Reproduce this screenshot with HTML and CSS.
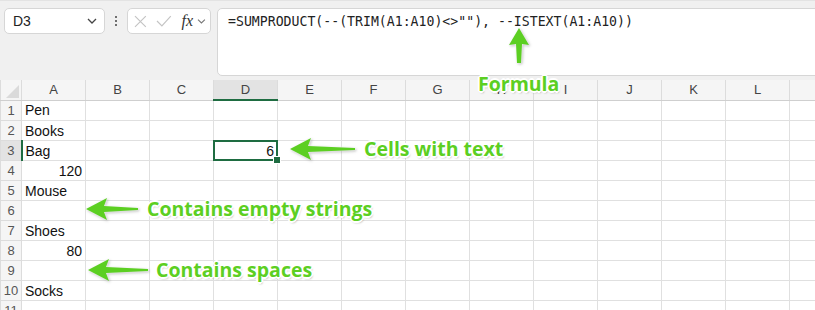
FILE: index.html
```html
<!DOCTYPE html>
<html lang="en">
<head>
    <meta charset="UTF-8">
    <title>Count cells with text</title>
    <link rel="stylesheet" href="styles.css">
</head>
<body>
<div class="app">
    <!-- Name box + formula bar -->
    <div class="toolbar">
        <div class="name-box">
            <span>D3</span>
            <svg width="10" height="6" viewBox="0 0 10 6"><path d="M1 1l4 4 4-4" fill="none" stroke="#444" stroke-width="1.3"/></svg>
        </div>
        <div class="kebab"><i></i><i></i><i></i></div>
        <div class="fx-group">
            <svg width="13" height="13" viewBox="0 0 13 13"><path d="M1 1l11 11M12 1L1 12" stroke="#c4c4c4" stroke-width="1.2"/></svg>
            <svg width="16" height="12" viewBox="0 0 16 12"><path d="M1 6l5 5L15 1" fill="none" stroke="#c4c4c4" stroke-width="1.2"/></svg>
            <span class="fx">fx</span>
            <svg width="9" height="5" viewBox="0 0 9 5"><path d="M1 .5l3.5 3.5L8 .5" fill="none" stroke="#777" stroke-width="1.1"/></svg>
        </div>
        <div class="formula">=SUMPRODUCT(--(TRIM(A1:A10)&lt;&gt;""), --ISTEXT(A1:A10))</div>
    </div>

    <!-- Worksheet -->
    <table class="sheet">
        <colgroup>
            <col class="c-head">
            <col><col><col><col><col><col><col><col><col><col><col><col><col>
        </colgroup>
        <tr class="col-heads">
            <th class="corner"><span></span></th>
            <th>A</th><th>B</th><th>C</th><th class="active">D</th><th>E</th><th>F</th><th>G</th><th>H</th><th>I</th><th>J</th><th>K</th><th>L</th><th></th>
        </tr>
        <tr><th>1</th><td>Pen</td><td></td><td></td><td></td><td></td><td></td><td></td><td></td><td></td><td></td><td></td><td></td><td></td></tr>
        <tr><th>2</th><td>Books</td><td></td><td></td><td></td><td></td><td></td><td></td><td></td><td></td><td></td><td></td><td></td><td></td></tr>
        <tr><th class="active">3</th><td>Bag</td><td></td><td></td><td class="num selected">6<span class="handle"></span></td><td></td><td></td><td></td><td></td><td></td><td></td><td></td><td></td><td></td></tr>
        <tr><th>4</th><td class="num">120</td><td></td><td></td><td></td><td></td><td></td><td></td><td></td><td></td><td></td><td></td><td></td><td></td></tr>
        <tr><th>5</th><td>Mouse</td><td></td><td></td><td></td><td></td><td></td><td></td><td></td><td></td><td></td><td></td><td></td><td></td></tr>
        <tr><th>6</th><td></td><td></td><td></td><td></td><td></td><td></td><td></td><td></td><td></td><td></td><td></td><td></td><td></td></tr>
        <tr><th>7</th><td>Shoes</td><td></td><td></td><td></td><td></td><td></td><td></td><td></td><td></td><td></td><td></td><td></td><td></td></tr>
        <tr><th>8</th><td class="num">80</td><td></td><td></td><td></td><td></td><td></td><td></td><td></td><td></td><td></td><td></td><td></td><td></td></tr>
        <tr><th>9</th><td></td><td></td><td></td><td></td><td></td><td></td><td></td><td></td><td></td><td></td><td></td><td></td><td></td></tr>
        <tr><th>10</th><td>Socks</td><td></td><td></td><td></td><td></td><td></td><td></td><td></td><td></td><td></td><td></td><td></td><td></td></tr>
        <tr><th>11</th><td></td><td></td><td></td><td></td><td></td><td></td><td></td><td></td><td></td><td></td><td></td><td></td><td></td></tr>
    </table>

    <!-- Callouts drawn over the sheet -->
    <svg class="arrows" width="815" height="310" viewBox="0 0 815 310">
        <polygon points="519,28 529,45 522,44 521,63 517,63 516,44 509,45"/>
        <polygon points="290,149 311,138 308,146 355,148 355,150 308,152 311,160"/>
        <polygon points="86,209 107,198 104,206 138,208 138,210 104,212 107,220"/>
        <polygon points="88,270 109,259 106,267 148,269 148,271 106,273 109,281"/>
    </svg>
    <div class="note note-formula">Formula</div>
    <div class="note note-text">Cells with text</div>
    <div class="note note-empty">Contains empty strings</div>
    <div class="note note-spaces">Contains spaces</div>
</div>
</body>
</html>
```

FILE: styles.css
```css
body {
    margin: 0;
    background: #ffffff;
    font-family: "Liberation Sans", Arial, sans-serif;
    overflow: hidden;
}
.app {
    position: relative;
    width: 815px;
    height: 310px;
    overflow: hidden;
}
.toolbar {
    display: flex;
    align-items: flex-start;
    height: 80px;
    box-sizing: border-box;
    padding: 7px 0 0 4px;
    background: #f0f0f0;
    border-top: 1px solid #e3e3e3;
}
.name-box {
    display: flex;
    align-items: center;
    justify-content: space-between;
    width: 101px;
    height: 26px;
    box-sizing: border-box;
    padding: 0 7px 0 8px;
    background: #ffffff;
    border: 1px solid #d6d6d6;
    border-radius: 5px;
    font-size: 14px;
    color: #222;
}
.kebab {
    width: 22px;
    height: 26px;
    display: flex;
    flex-direction: column;
    align-items: center;
    justify-content: center;
    gap: 2px;
}
.kebab i {
    width: 2px;
    height: 2px;
    background: #444;
    border-radius: 1px;
}
.fx-group {
    display: flex;
    align-items: center;
    gap: 9px;
    width: 84px;
    height: 26px;
    box-sizing: border-box;
    padding: 0 4px 0 6px;
    background: #ffffff;
    border: 1px solid #d6d6d6;
    border-radius: 5px;
}
.fx-group .fx {
    font-family: "Liberation Serif", "Times New Roman", serif;
    font-style: italic;
    font-size: 16px;
    color: #333;
    margin-left: 1px;
    margin-right: -5px;
}
.formula {
    flex: 1;
    height: 68px;
    margin-left: 6px;
    margin-right: -10px;
    box-sizing: border-box;
    padding: 5px 0 0 10px;
    background: #ffffff;
    border: 1px solid #d6d6d6;
    border-radius: 5px;
    font-family: "DejaVu Sans Mono", monospace;
    font-size: 13.2px;
    color: #222;
    white-space: nowrap;
}

/* worksheet grid */
.sheet {
    border-collapse: collapse;
    table-layout: fixed;
    width: 853px;
    font-size: 14px;
    color: #111;
}
.sheet col { width: 64px; }
.sheet col.c-head { width: 21px; }
.sheet tr { height: 20px; }
.sheet td {
    border: 1px solid #e0e0e0;
    padding: 0 3px 0 3px;
    height: 19px;
    white-space: nowrap;
    overflow: visible;
}
.sheet td.num { text-align: right; }
.sheet th {
    background: #f5f5f5;
    border: 1px solid #dcdcdc;
    font-weight: normal;
    font-size: 13px;
    color: #555;
    padding: 0;
    text-align: center;
}
.sheet .col-heads th {
    border-top: none;
    border-bottom: 1px solid #cfcfcf;
    color: #444;
}
.sheet .col-heads th.active {
    background: #e3e3e3;
    border-bottom: 2px solid #1e6c41;
}
.sheet tr th.active {
    background: #e3e3e3;
}
.sheet tr:not(.col-heads) th.active {
    border-right: 2px solid #1e6c41;
}
.sheet th.corner {
    position: relative;
}
.sheet th.corner span {
    position: absolute;
    right: 2px;
    bottom: 2px;
    width: 0;
    height: 0;
    border-left: 13px solid transparent;
    border-bottom: 13px solid #dadada;
}
.sheet td.selected {
    position: relative;
    padding-right: 3px;
}
.sheet td.selected::after {
    content: "";
    position: absolute;
    left: -1px;
    top: -1px;
    right: -1px;
    bottom: -1px;
    border: 2px solid #1e6c41;
}
.sheet td.selected .handle {
    position: absolute;
    right: -4px;
    bottom: -4px;
    width: 6px;
    height: 6px;
    background: #1e6c41;
    border: 1px solid #ffffff;
    z-index: 1;
}

/* callouts */
.arrows {
    position: absolute;
    left: 0;
    top: 0;
    pointer-events: none;
    fill: #5ccf22;
    filter: drop-shadow(0 0 1px #ffffff) drop-shadow(1px 1px 1px rgba(0, 0, 0, 0.25));
}
.note {
    position: absolute;
    font-family: "Open Sans", sans-serif;
    font-weight: bold;
    font-size: 19.5px;
    line-height: 20px;
    color: #5ccf22;
    white-space: nowrap;
    text-shadow: 1px 0 0 #fff, -1px 0 0 #fff, 0 1px 0 #fff, 0 -1px 0 #fff,
                 1px 1px 0 #fff, -1px -1px 0 #fff, 1px -1px 0 #fff, -1px 1px 0 #fff,
                 2px 0 0 #fff, -2px 0 0 #fff, 0 2px 0 #fff, 0 -2px 0 #fff,
                 1px 2px 2px rgba(0, 0, 0, 0.3);
}
.note-formula { left: 478px; top: 74px; }
.note-text { left: 364px; top: 139px; }
.note-empty { left: 147px; top: 199px; }
.note-spaces { left: 156px; top: 260px; }
```
